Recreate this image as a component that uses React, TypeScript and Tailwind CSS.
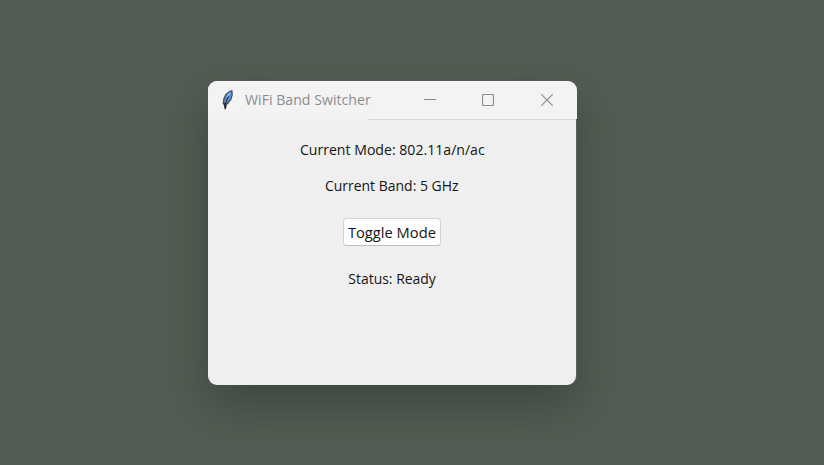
import React from "react";

function FeatherIcon() {
  return (
    <svg width="16" height="22" viewBox="0 0 16 22" className="block shrink-0">
      <path d="M12.2 1 8.8 2.2 5.2 5.4 3.2 9.8 2.7 14.4 4.8 17.2 8.4 14.8 11.4 10.8 12.9 5.5Z" fill="#4a4f57" />
      <path d="M11 2.6 8.6 3.8 5.6 7.4 4.1 12 4.6 14.6 7.8 13.4 10.4 9.8 11.7 5.5Z" fill="#5a92d8" />
      <path d="M10.8 3 8.6 4.4 6.2 8 8.6 7Z" fill="#9cc4f0" />
      <path d="M8.6 7.5 6.8 11 5.2 15.5" fill="none" stroke="#172331" strokeWidth="1" />
      <path d="M4.2 14.5 5.2 20.2 6.2 16" fill="none" stroke="#202429" strokeWidth="1.2" />
      <path d="M12.4 1.5v4" stroke="#8a8a88" strokeWidth=".8" />
    </svg>
  );
}

function TitleBar() {
  return (
    <header className="flex h-[38px] w-[369px] items-center rounded-t-[9px] bg-[#f3f3f3] pl-3 text-[#8d8d8d]">
      <FeatherIcon />
      <h1 className="mb-[2px] ml-[9px] w-[170px] origin-left scale-x-[0.943] whitespace-nowrap text-[15px] leading-[20px]">WiFi Band Switcher</h1>
      <div className="ml-[9px] flex items-center">
        <svg width="12" height="12" viewBox="0 0 12 12"><path d="M0 5.5h12" stroke="currentColor" /></svg>
        <svg width="12" height="12" viewBox="0 0 12 12" className="ml-[46px]"><rect x=".5" y=".5" width="11" height="11" rx="1" fill="none" stroke="currentColor" strokeWidth="1.2" /></svg>
        <svg width="12" height="12" viewBox="0 0 12 12" className="ml-[47px]"><path d="m.3.3 11.4 11.4m0-11.4L.3 11.7" stroke="currentColor" strokeWidth="1.2" /></svg>
      </div>
    </header>
  );
}

export default function App() {
  return (
    <div className="flex h-[465px] w-[824px] items-start overflow-hidden bg-[#535d53] pt-[81px] pl-[208px] font-['Open_Sans','Noto_Sans',sans-serif]">
      <section className="h-[304px] w-[368px] rounded-[9px] bg-[#efefef] shadow-[1px_0_0_#5d655e,0_20px_46px_2px_rgba(24,32,26,0.34)]">
        <TitleBar />
        <div className="ml-[160px] h-px w-[208px] bg-[#d7d7d7]" />
        <main className="flex w-[368px] flex-col items-center pt-[19px] text-[15px] leading-[20px] text-[#151515]">
          <p className="scale-x-[0.94]">Current Mode: 802.11a/n/ac</p>
          <p className="mt-4 scale-x-[0.932]">Current Band: 5 GHz</p>
          <button className="mt-[23px] flex h-[28px] w-[98px] items-center justify-center whitespace-nowrap rounded-[4px] border border-[#d2d2d2] border-b-[#bdbdbd] bg-[#fefefe]">
            <span className="scale-x-[0.98]">Toggle Mode</span>
          </button>
          <p className="mt-[22px] scale-x-[0.93]">Status: Ready</p>
        </main>
      </section>
    </div>
  );
}
